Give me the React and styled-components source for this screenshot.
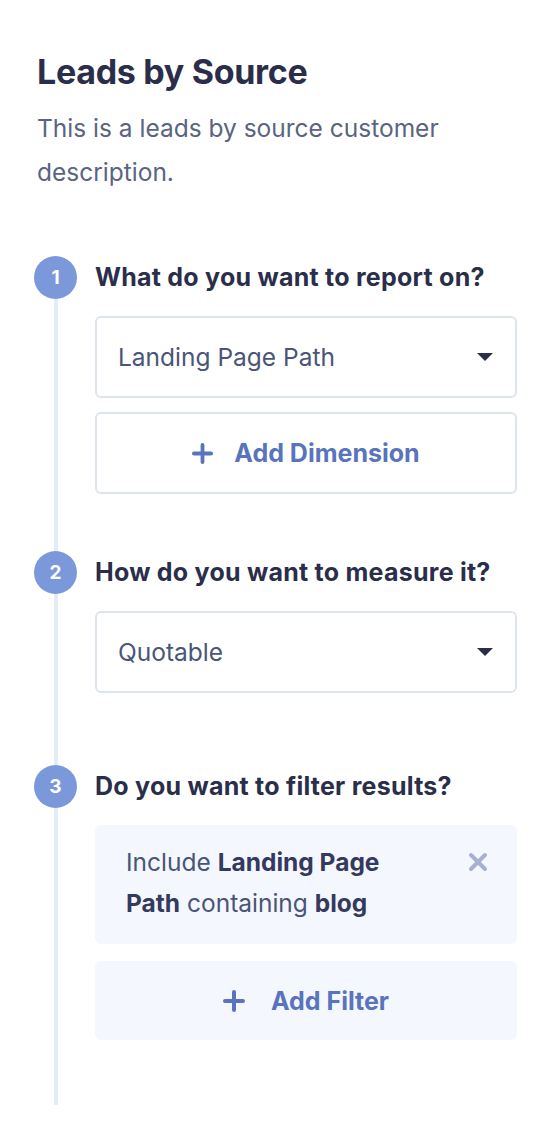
import React from "react";
import styled, { createGlobalStyle } from "styled-components";

const Global = createGlobalStyle`
  html, body {
    margin: 0;
    padding: 0;
    background: #ffffff;
    font-family: Inter, "Noto Sans", "Liberation Sans", sans-serif;
    -webkit-font-smoothing: antialiased;
  }
`;

const Page = styled.div`
  padding: 50px 41px 0 37px;
  box-sizing: border-box;
  width: 558px;
`;

const Title = styled.h2`
  margin: 0;
  font-size: 34px;
  line-height: 44px;
  font-weight: 700;
  color: #2a2e4a;
  letter-spacing: -0.3px;
`;

const Desc = styled.p`
  margin: 12px 0 0;
  font-size: 24.5px;
  line-height: 44px;
  color: #5a6482;
`;

const Steps = styled.div`
  margin-top: 62px;
  margin-left: -3px;
`;

const Step = styled.div`
  display: grid;
  grid-template-columns: 43px 1fr;
  column-gap: 18px;
`;

const Rail = styled.div`
  display: flex;
  flex-direction: column;
  align-items: center;
`;

const Circle = styled.div`
  width: 43px;
  height: 43px;
  border-radius: 50%;
  background: #7b98db;
  color: #fff;
  font-weight: 700;
  font-size: 19px;
  display: flex;
  align-items: center;
  justify-content: center;
  flex-shrink: 0;
`;

const Line = styled.div`
  flex: 1;
  width: 4px;
  background: #e2edf8;
`;

const Body = styled.div`
  padding-bottom: ${(p) => p.$pad}px;
`;

const Question = styled.h3`
  margin: 0;
  font-size: 25px;
  line-height: 43px;
  font-weight: 700;
  color: #2a2e4a;
  letter-spacing: 0.25px;
`;

const Stack = styled.div`
  margin-top: 17px;
  display: flex;
  flex-direction: column;
  gap: ${(p) => p.$gap || 14}px;
`;

const Select = styled.div`
  height: 82px;
  box-sizing: border-box;
  border: 2px solid #dde3ef;
  border-radius: 6px;
  display: flex;
  align-items: center;
  justify-content: space-between;
  padding: 0 22px 0 21px;
  font-size: 24.5px;
  color: #4a5578;
`;

const Caret = styled.span`
  width: 0;
  height: 0;
  border-left: 8px solid transparent;
  border-right: 8px solid transparent;
  border-top: 8px solid #2a2e4a;
`;

const AddButton = styled.div`
  height: ${(p) => (p.$soft ? 79 : 82)}px;
  box-sizing: border-box;
  border: ${(p) => (p.$soft ? "none" : "2px solid #dde3ef")};
  background: ${(p) => (p.$soft ? "#f4f7fd" : "#fff")};
  border-radius: 6px;
  display: flex;
  align-items: center;
  justify-content: center;
  gap: ${(p) => (p.$soft ? 26 : 21)}px;
  font-size: 25px;
  font-weight: 700;
  color: #5874bd;
`;

const FilterCard = styled.div`
  background: #f4f7fd;
  border-radius: 6px;
  padding: 17px 29px 20px 31px;
  display: flex;
  justify-content: space-between;
  align-items: flex-start;
  font-size: 24.5px;
  line-height: 41px;
  color: #4a5578;
`;

const FilterText = styled.p`
  margin: 0;
  max-width: 290px;
`;

const Strong = styled.strong`
  color: #343a5e;
  font-weight: 700;
`;

const CloseBtn = styled.span`
  display: flex;
  margin-top: 10px;
`;

const Plus = ({ size = 22 }) => (
  <svg width={size} height={size} viewBox="0 0 22 22">
    <path d="M11 2v18M2 11h18" stroke="#5874bd" strokeWidth="4" strokeLinecap="round" />
  </svg>
);

const Cross = () => (
  <svg width="20" height="20" viewBox="0 0 20 20">
    <path d="M3 3l14 14M17 3L3 17" stroke="#a8b0d2" strokeWidth="4" strokeLinecap="round" />
  </svg>
);

export default function App() {
  return (
    <Page>
      <Global />
      <Title>Leads by Source</Title>
      <Desc>This is a leads by source customer description.</Desc>
      <Steps>
        <Step>
          <Rail>
            <Circle>1</Circle>
            <Line />
          </Rail>
          <Body $pad={57}>
            <Question>What do you want to report on?</Question>
            <Stack>
              <Select>
                Landing Page Path
                <Caret />
              </Select>
              <AddButton>
                <Plus size={21} />
                Add Dimension
              </AddButton>
            </Stack>
          </Body>
        </Step>
        <Step>
          <Rail>
            <Circle>2</Circle>
            <Line />
          </Rail>
          <Body $pad={72}>
            <Question>How do you want to measure it?</Question>
            <Stack>
              <Select>
                Quotable
                <Caret />
              </Select>
            </Stack>
          </Body>
        </Step>
        <Step>
          <Rail>
            <Circle>3</Circle>
            <Line />
          </Rail>
          <Body $pad={65}>
            <Question>Do you want to filter results?</Question>
            <Stack $gap={17}>
              <FilterCard>
                <FilterText>
                  Include <Strong>Landing Page Path</Strong> containing{" "}
                  <Strong>blog</Strong>
                </FilterText>
                <CloseBtn>
                  <Cross />
                </CloseBtn>
              </FilterCard>
              <AddButton $soft>
                <Plus size={22} />
                Add Filter
              </AddButton>
            </Stack>
          </Body>
        </Step>
      </Steps>
    </Page>
  );
}
